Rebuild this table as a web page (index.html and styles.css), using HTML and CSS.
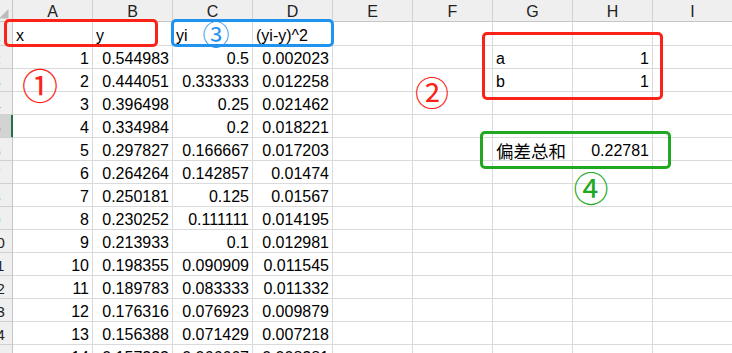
FILE: index.html
```html
<!DOCTYPE html>
<html lang="zh-CN">
<head>
<meta charset="utf-8">
<title>Sheet</title>
<link rel="stylesheet" href="styles.css">
</head>
<body>
<div class="sheet">
  <div class="corner"><svg class="tri" width="13" height="22" viewBox="0 0 13 22"><polygon points="-1,18.5 8.5,18.5 8.5,9" fill="#bcbcbc"/></svg></div>
  <div class="cell ch">A</div><div class="cell ch">B</div><div class="cell ch">C</div><div class="cell ch">D</div><div class="cell ch">E</div><div class="cell ch">F</div><div class="cell ch">G</div><div class="cell ch">H</div><div class="cell ch">I</div>

  <div class="cell rh"><span>1</span></div><div class="cell">x</div><div class="cell">y</div><div class="cell">yi</div><div class="cell">(yi-y)^2</div><div class="cell"></div><div class="cell"></div><div class="cell"></div><div class="cell"></div><div class="cell"></div>

  <div class="cell rh"><span>2</span></div><div class="cell num">1</div><div class="cell num">0.544983</div><div class="cell num">0.5</div><div class="cell num">0.002023</div><div class="cell"></div><div class="cell"></div><div class="cell">a</div><div class="cell num">1</div><div class="cell"></div>

  <div class="cell rh"><span>3</span></div><div class="cell num">2</div><div class="cell num">0.444051</div><div class="cell num">0.333333</div><div class="cell num">0.012258</div><div class="cell"></div><div class="cell"></div><div class="cell">b</div><div class="cell num">1</div><div class="cell"></div>

  <div class="cell rh"><span>4</span></div><div class="cell num">3</div><div class="cell num">0.396498</div><div class="cell num">0.25</div><div class="cell num">0.021462</div><div class="cell"></div><div class="cell"></div><div class="cell"></div><div class="cell"></div><div class="cell"></div>

  <div class="cell rh sel"><span>5</span></div><div class="cell num">4</div><div class="cell num">0.334984</div><div class="cell num">0.2</div><div class="cell num">0.018221</div><div class="cell"></div><div class="cell"></div><div class="cell"></div><div class="cell"></div><div class="cell"></div>

  <div class="cell rh"><span>6</span></div><div class="cell num">5</div><div class="cell num">0.297827</div><div class="cell num">0.166667</div><div class="cell num">0.017203</div><div class="cell"></div><div class="cell"></div><div class="cell"><span class="cjk">偏差总和</span></div><div class="cell num">0.22781</div><div class="cell"></div>

  <div class="cell rh"><span>7</span></div><div class="cell num">6</div><div class="cell num">0.264264</div><div class="cell num">0.142857</div><div class="cell num">0.01474</div><div class="cell"></div><div class="cell"></div><div class="cell"></div><div class="cell"></div><div class="cell"></div>

  <div class="cell rh"><span>8</span></div><div class="cell num">7</div><div class="cell num">0.250181</div><div class="cell num">0.125</div><div class="cell num">0.01567</div><div class="cell"></div><div class="cell"></div><div class="cell"></div><div class="cell"></div><div class="cell"></div>

  <div class="cell rh"><span>9</span></div><div class="cell num">8</div><div class="cell num">0.230252</div><div class="cell num">0.111111</div><div class="cell num">0.014195</div><div class="cell"></div><div class="cell"></div><div class="cell"></div><div class="cell"></div><div class="cell"></div>

  <div class="cell rh"><span>10</span></div><div class="cell num">9</div><div class="cell num">0.213933</div><div class="cell num">0.1</div><div class="cell num">0.012981</div><div class="cell"></div><div class="cell"></div><div class="cell"></div><div class="cell"></div><div class="cell"></div>

  <div class="cell rh"><span>11</span></div><div class="cell num">10</div><div class="cell num">0.198355</div><div class="cell num">0.090909</div><div class="cell num">0.011545</div><div class="cell"></div><div class="cell"></div><div class="cell"></div><div class="cell"></div><div class="cell"></div>

  <div class="cell rh"><span>12</span></div><div class="cell num">11</div><div class="cell num">0.189783</div><div class="cell num">0.083333</div><div class="cell num">0.011332</div><div class="cell"></div><div class="cell"></div><div class="cell"></div><div class="cell"></div><div class="cell"></div>

  <div class="cell rh"><span>13</span></div><div class="cell num">12</div><div class="cell num">0.176316</div><div class="cell num">0.076923</div><div class="cell num">0.009879</div><div class="cell"></div><div class="cell"></div><div class="cell"></div><div class="cell"></div><div class="cell"></div>

  <div class="cell rh"><span>14</span></div><div class="cell num">13</div><div class="cell num">0.156388</div><div class="cell num">0.071429</div><div class="cell num">0.007218</div><div class="cell"></div><div class="cell"></div><div class="cell"></div><div class="cell"></div><div class="cell"></div>

  <div class="cell rh"><span>15</span></div><div class="cell num">14</div><div class="cell num">0.157333</div><div class="cell num">0.066667</div><div class="cell num">0.008281</div><div class="cell"></div><div class="cell"></div><div class="cell"></div><div class="cell"></div><div class="cell"></div>

  <div class="box red box-xy"></div>
  <div class="box blue box-yi"></div>
  <div class="box red box-ab"></div>
  <div class="box green box-sum"></div>

  <span class="mark red-t m1">①</span>
  <span class="mark red-t m2">②</span>
  <span class="mark blue-t m3">③</span>
  <span class="mark green-t m4">④</span>
</div>
</body>
</html>
```

FILE: styles.css
```css
* {
  box-sizing: border-box;
  margin: 0;
  padding: 0;
}

html, body {
  margin: 0;
  background: #ffffff;
  overflow: hidden;
}

body {
  font-family: "Liberation Sans", "Noto Sans CJK SC", sans-serif;
  font-size: 16px;
  color: #000000;
}

.sheet {
  position: relative;
  width: 732px;
  height: 353px;
  overflow: hidden;
  display: grid;
  grid-template-columns: 13px repeat(9, 80px);
  grid-template-rows: 22px 24px repeat(14, 23px);
}

.cell {
  display: flex;
  align-items: flex-end;
  justify-content: flex-start;
  padding: 0 3px;
  line-height: 18px;
  white-space: nowrap;
  overflow: hidden;
  border-right: 1px solid #dadada;
  border-bottom: 1px solid #dadada;
}

.num {
  justify-content: flex-end;
}

.cjk {
  font-family: "Noto Sans CJK SC", sans-serif;
  font-size: 17.5px;
  line-height: 18px;
}

.corner {
  position: relative;
  background: #efefef;
  border-right: 1px solid #c6c6c6;
  border-bottom: 1px solid #c6c6c6;
}

.tri {
  position: absolute;
  left: 0;
  top: 0;
}

.ch {
  justify-content: center;
  background: #efefef;
  color: #222222;
  border-right: 1px solid #d2d2d2;
  border-bottom: 1px solid #c6c6c6;
}

.rh {
  justify-content: flex-end;
  padding: 0;
  background: #efefef;
  color: #222222;
  font-size: 15px;
  border-right: 1px solid #c6c6c6;
  border-bottom: 1px solid #d0d0d0;
}

.rh span {
  flex: 0 0 31px;
  text-align: center;
}

.rh.sel {
  background: #d3d3d3;
  border-right-color: #217346;
  box-shadow: inset -1px 0 0 #217346;
}

/* annotation overlays */
.box {
  position: absolute;
  border: 3px solid;
  border-radius: 5px;
}

.red { border-color: #fb2317; }
.blue { border-color: #1f93ee; }
.green { border-color: #20a920; }

.box-xy  { left: 4px;   top: 19px;  width: 154px; height: 28px; }
.box-yi  { left: 171px; top: 19px;  width: 163px; height: 28px; }
.box-ab  { left: 482px; top: 32px;  width: 181px; height: 68px; }
.box-sum { left: 480px; top: 131px; width: 191px; height: 38px; }

.mark {
  position: absolute;
  display: flex;
  align-items: center;
  justify-content: center;
  width: 44px;
  height: 44px;
  font-family: "Noto Sans CJK SC", sans-serif;
  line-height: 1;
}

.red-t { color: #fb2317; }
.blue-t { color: #1f93ee; }
.green-t { color: #20a920; }

.m1 { left: 18px;  top: 62px;  font-size: 36px; }
.m2 { left: 410px; top: 70px;  font-size: 34px; }
.m3 { left: 194px; top: 11px;  font-size: 27px; }
.m4 { left: 569px; top: 164px; font-size: 35px; }
```
